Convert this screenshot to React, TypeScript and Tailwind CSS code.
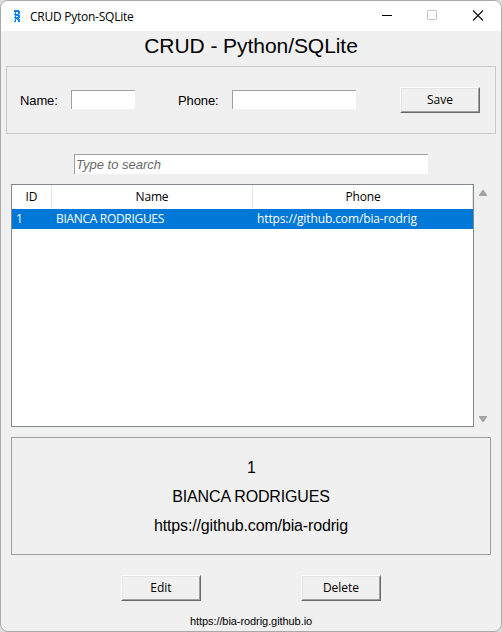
import type { ReactNode } from 'react';

const ui = "font-['Open_Sans','Noto_Sans',sans-serif]";

function Button({ children, className = '' }: { children: ReactNode; className?: string }) {
  return (
    <button
      className={`h-[26px] w-20 border border-t-white border-l-white border-r-[#696969] border-b-[#696969] bg-[#f0f0f0] ${className}`}
    >
      <span
        className={`flex h-full w-full items-center justify-center border border-t-[#e3e3e3] border-l-[#e3e3e3] border-r-[#a0a0a0] border-b-[#a0a0a0] text-[12px] leading-none ${ui}`}
      >
        {children}
      </span>
    </button>
  );
}

function TitleBar() {
  return (
    <header className="flex h-[30px] shrink-0 items-center bg-white">
      <svg className="ml-[13px] shrink-0" width="7" height="14" viewBox="0 0 7 14" fill="#0a84ff" shapeRendering="crispEdges">
        <path fillRule="evenodd" d="M0 1H5V2H6V5H5V6H6V9H5V10H6V13H4V11H3V10H2V13H0V12H1V9H0V8H1V6H0V5H1V3H0ZM2 3V5H4V3ZM2 7V8H4V7Z" />
      </svg>
      <span className={`mt-px ml-[9px] text-[12px] leading-4 whitespace-nowrap tracking-[-0.25px] ${ui}`}>CRUD Pyton-SQLite</span>
      <svg className="ml-auto shrink-0" width="128" height="30" viewBox="373 1 128 30" fill="none">
        <path d="M382 15.5H392" stroke="#000" />
        <rect x="427.5" y="10.5" width="9" height="9" rx="0.5" stroke="#c8c8c8" />
        <path d="M473 10.5L483 20.5M483 10.5L473 20.5" stroke="#111" strokeWidth="1.1" />
      </svg>
    </header>
  );
}

export default function App() {
  return (
    <div className="h-[632px] w-[502px] bg-[#dcdcdc] text-black font-['Liberation_Sans',Arial,sans-serif]">
      <div className="flex h-full w-full flex-col overflow-hidden rounded-lg border border-[#a9a9a9] bg-[#f0f0f0]">
        <TitleBar />
        <h1 className="h-[35px] shrink-0 text-center text-[21px] leading-[30px] tracking-[-0.06px]">CRUD - Python/SQLite</h1>

        <form className="ml-[5px] flex h-[68px] w-[490px] shrink-0 items-start border border-[#c8c8c8]">
          <label className="mt-[25px] ml-[13px] w-[51px] text-[13px] leading-[18px] whitespace-nowrap tracking-[-0.12px]">Name:</label>
          <div className="mt-[23px] h-[19px] w-16 border-t border-l border-[#a0a0a0] bg-white" />
          <label className="mt-[25px] ml-[43px] w-[54px] text-[13px] leading-[18px] whitespace-nowrap tracking-[-0.12px]">Phone:</label>
          <div className="mt-[23px] h-[19px] w-[124px] border-t border-l border-[#a0a0a0] bg-white" />
          <Button className="mt-5 ml-11">Save</Button>
        </form>

        <div className="mt-5 ml-[73px] flex h-5 w-[354px] shrink-0 items-center border-t border-l border-[#a0a0a0] bg-white pl-px text-[13px] text-[#696969] italic">
          Type to search
        </div>

        <div className="mt-[10px] ml-[10px] flex h-[243px] shrink-0">
          <div className={`w-[463px] border border-[#828790] bg-white text-[12px] ${ui}`}>
            <div className="grid h-6 grid-cols-[40px_201px_220px] text-center leading-6">
              <span className="border-r border-[#e5e5e5]">ID</span>
              <span className="border-r border-[#e5e5e5] tracking-[-0.2px]">Name</span>
              <span className="border-r border-[#e5e5e5] pl-px tracking-[-0.2px]">Phone</span>
            </div>
            <div className="grid h-5 grid-cols-[40px_201px_220px] bg-[#0078d7] leading-5 text-white">
              <span className="pl-1">1</span>
              <span className="pl-1 tracking-[-0.31px]">BIANCA RODRIGUES</span>
              <span className="pl-1 tracking-[-0.12px]">https://github.com/bia-rodrig</span>
            </div>
          </div>
          <div className="ml-[5px] flex flex-col justify-between pt-[6px] pb-[5px]">
            <svg width="8" height="6" viewBox="0 0 8 6" fill="#a3a3a3"><path d="M3.4 0H4.6L8 5V6H0V5Z" /></svg>
            <svg width="8" height="6" viewBox="0 0 8 6" fill="#a3a3a3"><path d="M0 0H8V1L4.6 6H3.4L0 1Z" /></svg>
          </div>
        </div>

        <section className="mt-[10px] ml-[10px] flex h-[118px] w-[480px] shrink-0 flex-col items-center border border-[#a0a0a0] pt-[15px] text-[16px] leading-[29px]">
          <span className="pl-px">1</span>
          <span className="tracking-[-0.17px]">BIANCA RODRIGUES</span>
          <span className="tracking-[-0.15px]">https://github.com/bia-rodrig</span>
        </section>

        <div className="mt-5 ml-[119px] flex shrink-0 gap-[100px] pl-px">
          <Button>Edit</Button>
          <Button>Delete</Button>
        </div>
        <footer className="mt-3 text-center text-[11px] leading-4 tracking-[-0.07px]">https://bia-rodrig.github.io</footer>
      </div>
    </div>
  );
}
